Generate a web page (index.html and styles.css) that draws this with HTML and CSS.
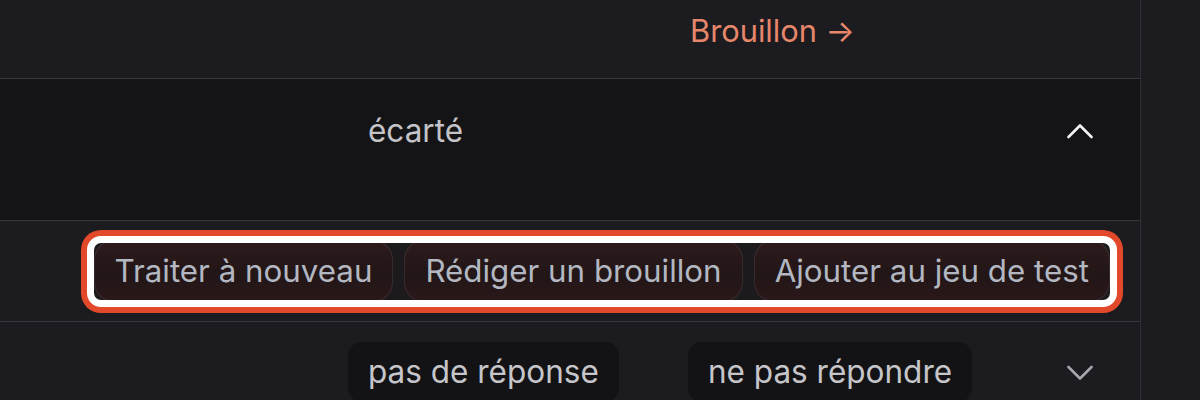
FILE: index.html
```html
<!DOCTYPE html>
<html lang="fr">
<head>
<meta charset="utf-8">
<link rel="stylesheet" href="styles.css">
</head>
<body>
<div class="main">
  <div class="row row-top">
    <div></div>
    <div></div>
    <div class="cell"><a class="link">Brouillon →</a></div>
  </div>
  <div class="row row-open">
    <div></div>
    <div class="cell"><span class="tag tag-plain">écarté</span></div>
    <div></div>
    <div class="cell chev-cell">
      <svg class="chev chev-up" width="26" height="16" viewBox="0 0 26 16"><path d="M1.5 14 L13 2.5 L24.5 14"/></svg>
    </div>
  </div>
  <div class="row-actions">
    <div class="actions">
      <button class="act">Traiter à nouveau</button>
      <button class="act">Rédiger un brouillon</button>
      <button class="act">Ajouter au jeu de test</button>
    </div>
  </div>
  <div class="row row-last">
    <div></div>
    <div class="cell"><span class="tag">pas de réponse</span></div>
    <div class="cell"><span class="tag">ne pas répondre</span></div>
    <div class="cell chev-cell">
      <svg class="chev chev-down" width="26" height="16" viewBox="0 0 26 16"><path d="M1.5 2 L13 13.5 L24.5 2"/></svg>
    </div>
  </div>
</div>
</body>
</html>
```

FILE: styles.css
```css
html, body {
  margin: 0;
  padding: 0;
  background: #1c1b20;
  height: 400px;
  overflow: hidden;
}

body {
  font-family: Inter, "Noto Sans", sans-serif;
}

.main {
  width: 1140px;
  height: 400px;
  border-right: 1px solid #2f2e34;
  box-sizing: content-box;
}

.row {
  display: grid;
  grid-template-columns: 348px 340px 1fr 100px;
  align-items: start;
}

.row-top {
  box-sizing: border-box;
  height: 79px;
  border-bottom: 1px solid #38373d;
  padding-top: 11px;
}

.link {
  display: block;
  padding-left: 2px;
  color: #e6876b;
  font-size: 30.8px;
  line-height: 40px;
  white-space: nowrap;
}

.row-open {
  background: #141416;
  height: 142px;
  box-sizing: border-box;
  border-bottom: 1px solid #38373d;
  padding-top: 32px;
}

.tag {
  display: inline-block;
  padding: 0 20px;
  font-size: 31.5px;
  line-height: 60px;
  color: #c6c6ca;
  background: #131316;
  border-radius: 14px;
  white-space: nowrap;
}

.tag-plain {
  background: transparent;
  line-height: 40px;
  color: #c3c3c8;
}

.chev-cell {
  padding-left: 27px;
  display: flex;
  align-items: center;
  height: 40px;
}

.chev {
  display: block;
  fill: none;
  stroke-width: 2.6;
  stroke-linecap: round;
  stroke-linejoin: round;
}

.chev-up { stroke: #f2f2f4; }
.chev-down { stroke: #a6a6ab; }

.row-actions {
  height: 101px;
  box-sizing: border-box;
  border-bottom: 1px solid #38373d;
  display: flex;
  align-items: center;
  justify-content: flex-end;
  padding-right: 23px;
}

.actions {
  display: flex;
  gap: 11px;
  height: 57px;
  border: 7px solid #ffffff;
  border-radius: 14px;
  box-shadow: 0 0 0 6px #e2492b;
  background: #1d1a1e;
  overflow: hidden;
  align-items: center;
}

.act {
  font-family: Inter, "Noto Sans", sans-serif;
  font-size: 31.3px;
  line-height: 56px;
  height: 62px;
  padding: 0 20px;
  color: #b2b7c1;
  background: linear-gradient(180deg, #2e1a1c 0%, #221617 55%, #2b1719 100%);
  border: 1px solid rgba(255, 255, 255, 0.09);
  border-radius: 20px;
  white-space: nowrap;
}

.row-last {
  padding-top: 20px;
}

.row-last .chev-cell {
  height: 62px;
}
```
